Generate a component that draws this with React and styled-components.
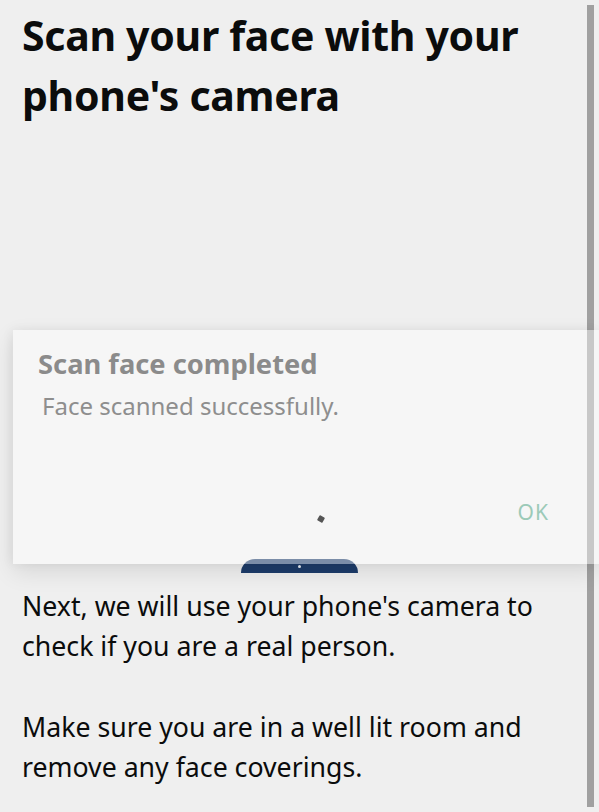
import React from 'react';
import styled, { createGlobalStyle } from 'styled-components';

const GlobalStyle = createGlobalStyle`
    html, body {
        margin: 0;
        padding: 0;
        background: #efefef;
        overflow: hidden;
    }
    body {
        font-family: 'Noto Sans', 'Liberation Sans', sans-serif;
    }
`;

const App = () => {
    return (
        <>
            <GlobalStyle />
            <Page>
                <Title>Scan your face with your phone's camera</Title>
                <Gap />
                <StartBtn>
                    <BtnDot />
                </StartBtn>
                <Body>
                    Next, we will use your phone's camera to check if you are a
                    real person.
                </Body>
                <Body>
                    Make sure you are in a well lit room and remove any face
                    coverings.
                </Body>
                <ScrollBar />
                <Dialog>
                    <DialogTitle>Scan face completed</DialogTitle>
                    <DialogText>Face scanned successfully.</DialogText>
                    <Spinner />
                    <DialogActions>
                        <OkBtn>OK</OkBtn>
                    </DialogActions>
                </Dialog>
            </Page>
        </>
    );
};

export default App;

const Page = styled.div`
    position: relative;
    width: 599px;
    height: 812px;
    padding: 5px 50px 0 22px;
    box-sizing: border-box;
`;

const Title = styled.h1`
    margin: 0;
    font-size: 41px;
    line-height: 60px;
    font-weight: 700;
    color: #0b0c0c;
    letter-spacing: -0.3px;
`;

const Gap = styled.div`
    height: 434px;
`;

const StartBtn = styled.div`
    display: flex;
    justify-content: center;
    padding-top: 6px;
    box-sizing: border-box;
    width: 117px;
    height: 14px;
    margin: 0 0 13px 219px;
    background: #1d3c6a;
    border-radius: 14px 14px 0 0;
`;

const BtnDot = styled.span`
    width: 3px;
    height: 3px;
    border-radius: 50%;
    background: #e8eef6;
`;

const Body = styled.p`
    margin: 0 0 40.3px;
    font-size: 26.7px;
    line-height: 40.3px;
    color: #0b0c0c;
`;

const ScrollBar = styled.div`
    position: absolute;
    top: 5px;
    bottom: 5px;
    left: 587px;
    width: 7px;
    background: #a0a0a0;
`;

const Dialog = styled.div`
    position: absolute;
    top: 330px;
    left: 13px;
    right: 0;
    height: 234px;
    box-sizing: border-box;
    padding: 17px 25px 0;
    background: rgba(255, 255, 255, 0.42);
    box-shadow: 0 8px 22px rgba(0, 0, 0, 0.1), -2px 0 10px rgba(0, 0, 0, 0.05);
    display: flex;
    flex-direction: column;
`;

const DialogTitle = styled.div`
    font-size: 27.3px;
    line-height: 34px;
    font-weight: 700;
    color: #8b8b8b;
`;

const DialogText = styled.div`
    margin: 10px 0 0 4px;
    font-size: 24px;
    line-height: 30px;
    color: #8e8e8e;
`;

const Spinner = styled.span`
    position: absolute;
    left: 305px;
    top: 186px;
    width: 6px;
    height: 6px;
    background: #555;
    transform: rotate(30deg);
    border-radius: 1px;
`;

const DialogActions = styled.div`
    margin-top: auto;
    display: flex;
    justify-content: flex-end;
    padding: 0 25px 38px 0;
`;

const OkBtn = styled.span`
    font-size: 21px;
    letter-spacing: 1px;
    color: #9ccab8;
`;
